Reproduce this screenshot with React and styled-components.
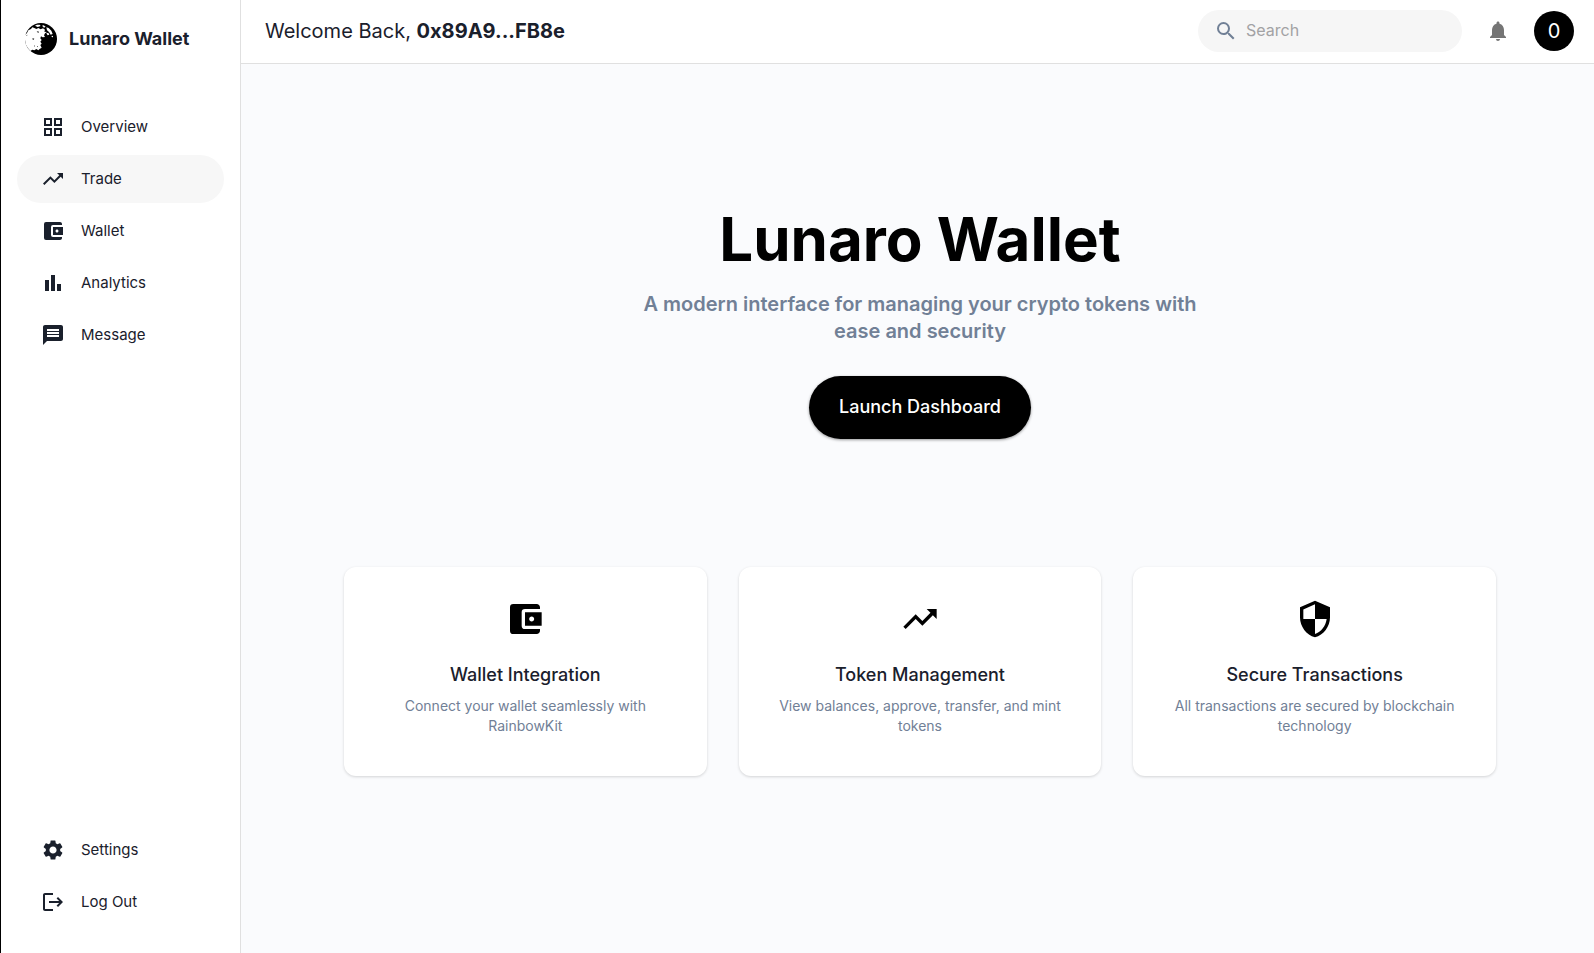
import React from 'react';
import styled, { createGlobalStyle } from 'styled-components';
import {
  MdAccountBalanceWallet,
  MdMessage,
  MdNotifications,
  MdSearch,
  MdSecurity,
  MdSettings,
  MdTrendingUp,
} from 'react-icons/md';

const GlobalStyle = createGlobalStyle`
  *, *::before, *::after { box-sizing: border-box; }
  body {
    margin: 0;
    background: #fafbfd;
    color: #1a202c;
    font-family: Inter, Roboto, sans-serif;
  }
  h1, h2, p { margin: 0; }
`;

const Shell = styled.div`
  display: flex;
  min-height: 100vh;
  border-left: 1px solid #000;
`;

const Sidebar = styled.aside`
  display: flex;
  flex-direction: column;
  flex: 0 0 240px;
  padding: 22px 16px 27px;
  background: #fff;
  border-right: 1px solid #e0e0e0;
`;

const Brand = styled.a`
  display: flex;
  align-items: center;
  gap: 12px;
  height: 34px;
  margin-bottom: 47px;
  padding-left: 8px;
  color: inherit;
  font-size: 18px;
  font-weight: 700;
  line-height: 20px;
  text-decoration: none;
`;

const NavList = styled.nav`
  display: flex;
  flex-direction: column;
  gap: 4px;

  &:last-child { margin-top: auto; }
`;

const NavLink = styled.a`
  display: flex;
  align-items: center;
  gap: 16px;
  height: 48px;
  padding: 0 24px;
  border-radius: 24px;
  background: ${(p) => (p.$active ? '#f7f7f7' : 'transparent')};
  color: inherit;
  font-size: 15px;
  line-height: 22px;
  text-decoration: none;

  svg { width: 24px; height: 24px; flex: none; }
`;

const Content = styled.div`
  display: flex;
  flex-direction: column;
  flex: 1;
  min-width: 0;
`;

const Header = styled.header`
  display: flex;
  align-items: center;
  gap: 16px;
  height: 64px;
  padding: 0 20px 2px 24px;
  background: #fff;
  border-bottom: 1px solid #e0e0e0;
`;

const Welcome = styled.p`
  margin-right: auto;
  font-size: 20px;
  white-space: nowrap;
`;

const SearchBox = styled.label`
  display: flex;
  align-items: center;
  gap: 8px;
  width: 264px;
  height: 42px;
  padding: 0 16px;
  border-radius: 21px;
  background: #f6f6f6;
  color: #718096;
`;

const SearchInput = styled.input`
  flex: 1;
  min-width: 0;
  padding: 0 0 2px;
  border: 0;
  outline: 0;
  background: none;
  color: #1a202c;
  font: 16px Inter, Roboto, sans-serif;

  &::placeholder { color: #a2a2a4; opacity: 1; }
`;

const IconButton = styled.button`
  display: grid;
  place-items: center;
  width: 40px;
  height: 40px;
  padding: 0;
  border: 0;
  border-radius: 50%;
  background: none;
  color: #757575;
`;

const Avatar = styled(IconButton)`
  background: #000;
  color: #fff;
  font: 20px Inter, Roboto, sans-serif;
`;

const Main = styled.main`
  display: flex;
  flex-direction: column;
  align-items: center;
  gap: 128px;
  padding: 139px 19px 64px 24px;
`;

const Hero = styled.section`
  display: flex;
  flex-direction: column;
  align-items: center;
  text-align: center;
`;

const Title = styled.h1`
  margin-bottom: 16px;
  color: #000;
  font-size: 60px;
  font-weight: 700;
  line-height: 72px;
`;

const Tagline = styled.p`
  max-width: 600px;
  margin-bottom: 31px;
  color: #718096;
  font-size: 20px;
  font-weight: 600;
  line-height: 27px;
`;

const LaunchButton = styled.button`
  height: 63px;
  padding: 0 30px 2px;
  border: 0;
  border-radius: 32px;
  background: #000;
  box-shadow: 0 1px 3px rgba(0, 0, 0, 0.4);
  color: #fff;
  font: 500 18px Inter, Roboto, sans-serif;
`;

const Features = styled.section`
  display: grid;
  grid-template-columns: repeat(3, 1fr);
  gap: 32px;
  width: 100%;
  max-width: 1152px;
`;

const Card = styled.article`
  display: flex;
  flex-direction: column;
  align-items: center;
  padding: 32px 32px 40px;
  border-radius: 12px;
  background: #fff;
  box-shadow: 0 1px 3px rgba(0, 0, 0, 0.16);
  text-align: center;

  svg { margin-bottom: 21px; color: #000; }
`;

const CardTitle = styled.h2`
  margin-bottom: 6px;
  font-size: 18px;
  font-weight: 500;
  line-height: 30px;
`;

const CardText = styled.p`
  color: #718096;
  font-size: 14px;
  line-height: 20px;
`;

const MoonLogo = () => (
  <svg width="32" height="32" viewBox="0 0 96 96" aria-hidden="true">
    <circle cx="48" cy="48" r="48" fill="#000" />
    <path
      fill="#fff"
      d="M0 36 6 30 10 22 18 18 22 13 28 15 34 18 40 15 47 19 54 16 60 20 58 26 66 27 60 31 57 37 60 42 53 43 48 40 46 46 50 51 46 56 50 62 46 66 50 74 44 78 40 82 34 78 28 82 22 80 16 84 8 74 2 64 0 50Z"
    />
    <path
      fill="#fff"
      d="M30 8 36 5 44 5 47 9 38 12ZM51 8 56 7 62 11 57 14ZM64 13 71 15 79 23 83 33 77 35 72 27 66 22ZM64 31 70 29 73 35 68 37ZM80 38 84 39 84 43 80 42Z"
    />
    <path
      fill="#000"
      d="M35 26 40 25 42 29 37 28ZM23 46 28 47 26 50 22 49ZM27 69 30 67 29 71ZM36 70 39 69 38 73ZM4 37 7 35 6 39Z"
    />
  </svg>
);

const Glyph = ({ d }) => (
  <svg viewBox="0 0 24 24" fill="currentColor" aria-hidden="true">
    <path d={d} />
  </svg>
);

const GridIcon = () => (
  <Glyph d="M3 3v8h8V3zm6 6H5V5h4zm-6 4v8h8v-8zm6 6H5v-4h4zm4-16v8h8V3zm6 6h-4V5h4zm-6 4v8h8v-8zm6 6h-4v-4h4z" />
);
const BarsIcon = () => <Glyph d="M4 9h4v11H4zm12 4h4v7h-4zm-6-9h4v16h-4z" />;
const LogoutIcon = () => (
  <Glyph d="m17 7-1.41 1.41L18.17 11H8v2h10.17l-2.58 2.58L17 17l5-5zM4 5h8V3H4c-1.1 0-2 .9-2 2v14c0 1.1.9 2 2 2h8v-2H4z" />
);

const primaryNav = [
  { label: 'Overview', Icon: GridIcon },
  { label: 'Trade', Icon: MdTrendingUp, active: true },
  { label: 'Wallet', Icon: MdAccountBalanceWallet },
  { label: 'Analytics', Icon: BarsIcon },
  { label: 'Message', Icon: MdMessage },
];

const secondaryNav = [
  { label: 'Settings', Icon: MdSettings },
  { label: 'Log Out', Icon: LogoutIcon },
];

const features = [
  {
    title: 'Wallet Integration',
    text: 'Connect your wallet seamlessly with RainbowKit',
    Icon: MdAccountBalanceWallet,
  },
  {
    title: 'Token Management',
    text: 'View balances, approve, transfer, and mint tokens',
    Icon: MdTrendingUp,
  },
  {
    title: 'Secure Transactions',
    text: 'All transactions are secured by blockchain technology',
    Icon: MdSecurity,
  },
];

const Nav = ({ items, label }) => (
  <NavList aria-label={label}>
    {items.map(({ label: text, Icon, active }) => (
      <NavLink key={text} href="#" $active={active} aria-current={active ? 'page' : undefined}>
        <Icon />
        {text}
      </NavLink>
    ))}
  </NavList>
);

export default function App() {
  return (
    <Shell>
      <GlobalStyle />
      <Sidebar>
        <Brand href="#">
          <MoonLogo />
          Lunaro Wallet
        </Brand>
        <Nav items={primaryNav} label="Main" />
        <Nav items={secondaryNav} label="Account" />
      </Sidebar>
      <Content>
        <Header>
          <Welcome>
            Welcome Back, <strong>0x89A9...FB8e</strong>
          </Welcome>
          <SearchBox>
            <MdSearch size={24} />
            <SearchInput type="search" placeholder="Search" aria-label="Search" />
          </SearchBox>
          <IconButton type="button" aria-label="Notifications">
            <MdNotifications size={24} />
          </IconButton>
          <Avatar type="button">0</Avatar>
        </Header>
        <Main>
          <Hero>
            <Title>Lunaro Wallet</Title>
            <Tagline>A modern interface for managing your crypto tokens with ease and security</Tagline>
            <LaunchButton type="button">Launch Dashboard</LaunchButton>
          </Hero>
          <Features>
            {features.map(({ title, text, Icon }) => (
              <Card key={title}>
                <Icon size={40} />
                <CardTitle>{title}</CardTitle>
                <CardText>{text}</CardText>
              </Card>
            ))}
          </Features>
        </Main>
      </Content>
    </Shell>
  );
}
